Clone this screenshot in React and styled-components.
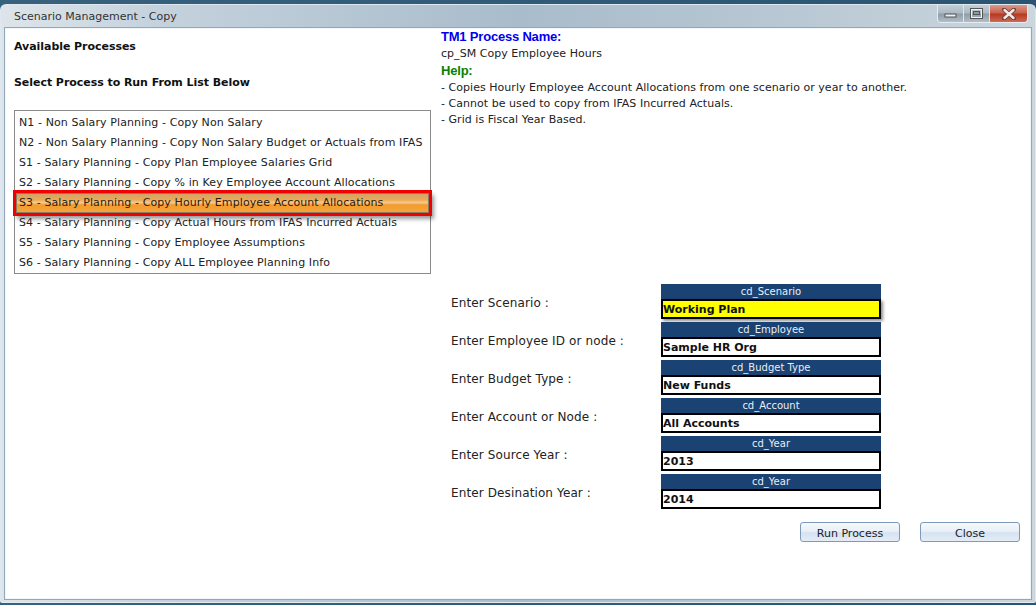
import React from "react";
import styled, { createGlobalStyle } from "styled-components";

const Global = createGlobalStyle`
  html, body { margin: 0; padding: 0; background: #2f5f7d; }
  body { font-family: "DejaVu Sans", Verdana, sans-serif; }
`;

const Desktop = styled.div`
  width: 1036px;
  height: 605px;
  box-sizing: border-box;
  padding: 4px 0 2px 0;
  overflow: hidden;
  background: linear-gradient(90deg, #37617c, #2f5a78 60%, #2a5470);
`;

const Frame = styled.div`
  height: 100%;
  box-sizing: border-box;
  display: flex;
  flex-direction: column;
  padding: 0 3px 2px 3px;
  border-radius: 6px 6px 2px 2px;
  border: 1px solid #dfe8f0;
  border-bottom: 1px solid #e3ebf2;
  background: linear-gradient(90deg, #dde5ea 0, #c4d2dd 15%, #a9bccb 50%, #b7c7d3 75%, #cbd6dd 100%);
`;

const TitleBar = styled.div`
  height: 22px;
  flex: none;
  display: flex;
  justify-content: space-between;
  align-items: flex-start;
  padding-left: 10px;
`;

const Title = styled.div`
  font-size: 11px;
  line-height: 23px;
  color: #333;
`;

const Controls = styled.div`
  display: flex;
  height: 17px;
  margin-right: 4px;
  border: 1px solid #e4ecf1;
  border-top: none;
  border-radius: 0 0 4px 4px;
  overflow: hidden;
`;

const Ctl = styled.div`
  width: ${(p) => p.$w}px;
  display: flex;
  align-items: center;
  justify-content: center;
  background: ${(p) =>
    p.$close
      ? "linear-gradient(180deg, #dc9a8c 0, #c9604c 45%, #b53a24 55%, #cd6a55 100%)"
      : "linear-gradient(180deg, #c3ced6 0, #aebbc5 45%, #8f9ea9 55%, #b2bfc8 100%)"};
  border-left: ${(p) => (p.$first ? "none" : "1px solid #dfe6eb")};
`;

const Panel = styled.div`
  flex: 1;
  display: grid;
  grid-template-columns: 436px 1fr;
  background: #fff;
  border: 1px solid #93a7bb;
  outline: 1px solid #f2f6f9;
  outline-offset: -2px;
  min-height: 0;
`;

const LeftCol = styled.div`
  padding: 12px 0 0 9px;
`;

const Heading = styled.div`
  font-size: 11px;
  font-weight: bold;
  line-height: 13px;
  color: #111;
  letter-spacing: -0.05px;
  margin-bottom: ${(p) => p.$mb}px;
`;

const ProcessList = styled.div`
  width: 417px;
  height: 164px;
  box-sizing: border-box;
  border: 1px solid #8a8a8a;
  padding: 2px 1px 0;
`;

const ProcessRow = styled.div`
  position: relative;
  height: 20px;
  line-height: 19px;
  font-size: 11px;
  color: #222;
  padding-left: 3px;
  letter-spacing: 0.1px;
  white-space: nowrap;
  ${(p) =>
    p.$selected &&
    `
    background: linear-gradient(180deg, #c9a36c 0, #eeaa55 35%, #f8c98a 48%, #f59a2a 60%, #f4a845 100%);
    box-shadow: inset 0 0 0 1px #8a7a60, 0 0 0 3px #f00000, 3px 4px 4px 2px rgba(0,0,0,.4);
    color: #2a2010;
  `}
`;

const RightCol = styled.div`
  display: flex;
  flex-direction: column;
`;

const Info = styled.div`
  height: 256px;
  flex: none;
`;

const InfoHead = styled.div`
  font-family: "Liberation Sans", Arial, sans-serif;
  font-size: 13px;
  font-weight: bold;
  line-height: 17px;
  margin-bottom: 1px;
  color: ${(p) => p.$color};
  letter-spacing: -0.2px;
`;

const InfoLine = styled.div`
  font-size: 11px;
  line-height: 16px;
  color: #222;
  letter-spacing: 0.04px;
`;

const NameLine = styled(InfoLine)`
  margin-top: 1px;
`;

const Form = styled.div`
  display: flex;
  flex-direction: column;
  gap: 3px;
  padding-left: 10px;
`;

const FormRow = styled.div`
  display: grid;
  grid-template-columns: 210px 220px;
  align-items: center;
`;

const FieldLabel = styled.div`
  font-size: 12px;
  color: #222;
  line-height: 14px;
  padding-top: 2px;
  letter-spacing: 0.12px;
`;

const Field = styled.div`
  display: flex;
  flex-direction: column;
`;

const FieldHead = styled.div`
  height: 15px;
  background: #1a4272;
  color: #e8eef5;
  font-size: 10px;
  line-height: 15px;
  text-align: center;
`;

const FieldValue = styled.div`
  height: 20px;
  box-sizing: border-box;
  border: 2px solid #000;
  font-size: 11px;
  font-weight: bold;
  line-height: 18px;
  color: #111;
  background: ${(p) => (p.$hl ? "#ffff00" : "#fff")};
  ${(p) => p.$hl && "box-shadow: 2px 2px 3px rgba(0,0,0,.45);"}
`;

const Buttons = styled.div`
  display: flex;
  justify-content: flex-end;
  gap: 20px;
  margin-top: 13px;
  padding-right: 11px;
`;

const Button = styled.div`
  width: 100px;
  height: 20px;
  box-sizing: border-box;
  border: 1px solid #7d9ab9;
  border-radius: 3px;
  background: linear-gradient(180deg, #f6f9fc 0, #e9f0f8 45%, #d5e2f1 55%, #e4edf7 100%);
  font-size: 11px;
  line-height: 21px;
  text-align: center;
  color: #222;
`;

const processes = [
  "N1 - Non Salary Planning - Copy Non Salary",
  "N2 - Non Salary Planning - Copy Non Salary Budget or Actuals from IFAS",
  "S1 - Salary Planning - Copy Plan Employee Salaries Grid",
  "S2 - Salary Planning - Copy % in Key Employee Account Allocations",
  "S3 - Salary Planning - Copy Hourly Employee Account Allocations",
  "S4 - Salary Planning - Copy Actual Hours from IFAS Incurred Actuals",
  "S5 - Salary Planning - Copy Employee Assumptions",
  "S6 - Salary Planning - Copy ALL Employee Planning Info",
];

const fields = [
  ["Enter Scenario :", "cd_Scenario", "Working Plan", true],
  ["Enter Employee ID or node :", "cd_Employee", "Sample HR Org"],
  ["Enter Budget Type :", "cd_Budget Type", "New Funds"],
  ["Enter Account or Node :", "cd_Account", "All Accounts"],
  ["Enter Source Year :", "cd_Year", "2013"],
  ["Enter Desination Year :", "cd_Year", "2014"],
];

export default function App() {
  return (
    <Desktop>
      <Global />
      <Frame>
        <TitleBar>
          <Title>Scenario Management - Copy</Title>
          <Controls>
            <Ctl $w={25} $first>
              <svg width="13" height="8" viewBox="0 0 13 8">
                <rect x="1" y="4" width="11" height="3" fill="#eef1f3" stroke="#555" strokeWidth="1" />
              </svg>
            </Ctl>
            <Ctl $w={25}>
              <svg width="13" height="11" viewBox="0 0 13 11">
                <rect x="1" y="1" width="11" height="9" fill="none" stroke="#eef1f3" strokeWidth="2" />
                <rect x="0.5" y="0.5" width="12" height="10" fill="none" stroke="#555" strokeWidth="1" />
                <rect x="3.5" y="3.5" width="6" height="3" fill="#8c9aa5" stroke="#555" strokeWidth="1" />
              </svg>
            </Ctl>
            <Ctl $w={37} $close>
              <svg width="14" height="12" viewBox="0 0 14 12">
                <path d="M2 1.5 L12 10.5 M12 1.5 L2 10.5" stroke="#6b4038" strokeWidth="4" strokeLinecap="round" />
                <path d="M2.5 2 L11.5 10 M11.5 2 L2.5 10" stroke="#f1ece9" strokeWidth="2.4" strokeLinecap="round" />
              </svg>
            </Ctl>
          </Controls>
        </TitleBar>
        <Panel>
          <LeftCol>
            <Heading $mb={23}>Available Processes</Heading>
            <Heading $mb={21}>Select Process to Run From List Below</Heading>
            <ProcessList>
              {processes.map((p, i) => (
                <ProcessRow key={p} $selected={i === 4}>{p}</ProcessRow>
              ))}
            </ProcessList>
          </LeftCol>
          <RightCol>
            <Info>
              <InfoHead $color="#0000ee">TM1 Process Name:</InfoHead>
              <NameLine>cp_SM Copy Employee Hours</NameLine>
              <InfoHead $color="#078007">Help:</InfoHead>
              <InfoLine>- Copies Hourly Employee Account Allocations from one scenario or year to another.</InfoLine>
              <InfoLine>- Cannot be used to copy from IFAS Incurred Actuals.</InfoLine>
              <InfoLine>- Grid is Fiscal Year Based.</InfoLine>
            </Info>
            <Form>
              {fields.map(([label, head, value, hl]) => (
                <FormRow key={label}>
                  <FieldLabel>{label}</FieldLabel>
                  <Field>
                    <FieldHead>{head}</FieldHead>
                    <FieldValue $hl={hl}>{value}</FieldValue>
                  </Field>
                </FormRow>
              ))}
            </Form>
            <Buttons>
              <Button>Run Process</Button>
              <Button>Close</Button>
            </Buttons>
          </RightCol>
        </Panel>
      </Frame>
    </Desktop>
  );
}
